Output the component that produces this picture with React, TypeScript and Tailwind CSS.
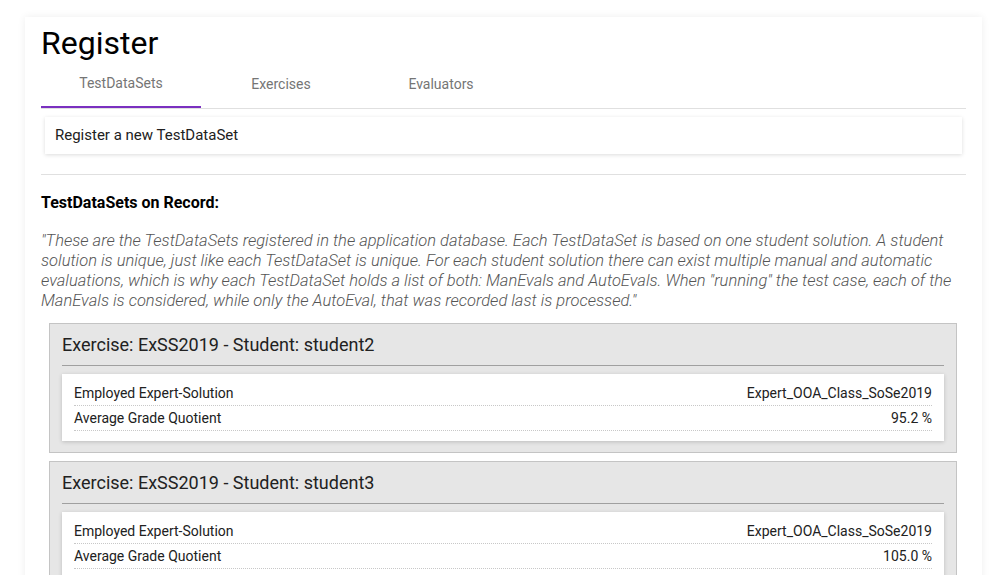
const TABS = ['TestDataSets', 'Exercises', 'Evaluators']

const DESCRIPTION =
  '"These are the TestDataSets registered in the application database. Each TestDataSet is based on one student solution. A student solution is unique, just like each TestDataSet is unique. For each student solution there can exist multiple manual and automatic evaluations, which is why each TestDataSet holds a list of both: ManEvals and AutoEvals. When "running" the test case, each of the ManEvals is considered, while only the AutoEval, that was recorded last is processed."'

const DATASETS = [
  { exercise: 'ExSS2019', student: 'student2', expert: 'Expert_OOA_Class_SoSe2019', grade: '95.2 %' },
  { exercise: 'ExSS2019', student: 'student3', expert: 'Expert_OOA_Class_SoSe2019', grade: '105.0 %' },
  { exercise: 'ExSS2019', student: 'student4', expert: 'Expert_OOA_Class_SoSe2019', grade: '88.1 %' },
]

function Row({ label, value }: { label: string; value: string }) {
  return (
    <div className="flex h-[25px] items-center justify-between border-b border-dotted border-[#c8c8c8] text-[14px] text-[#212121]">
      <span>{label}</span>
      <span>{value}</span>
    </div>
  )
}

function App() {
  return (
    <div className="min-h-screen bg-white pl-[25px] pr-[21px] pt-[17px] font-['Roboto',sans-serif]">
      <div className="bg-white px-4 pt-[7px] shadow-[0_0_8px_rgba(0,0,0,0.07)]">
        <h1 className="h-[37px] text-[32px] leading-[38px] text-black">Register</h1>

        <div className="flex border-b border-[#e0e0e0]">
          {TABS.map((tab, i) => (
            <div
              key={tab}
              className={
                i === 0
                  ? 'flex h-[47px] w-40 items-center justify-center border-b-2 border-[#7a30c0] text-[14px] text-[#757575] mb-[-1px]'
                  : 'flex h-[47px] w-40 items-center justify-center text-[14px] text-[#757575]'
              }
            >
              {tab}
            </div>
          ))}
        </div>

        <div className="mx-1 mt-2 flex h-[37px] items-center bg-white px-[10px] text-[15px] text-[#212121] shadow-[0_1px_4px_rgba(0,0,0,0.14)]">
          Register a new TestDataSet
        </div>

        <hr className="mt-5 border-t border-[#e0e0e0]" />

        <h3 className="mt-4 text-[16px] font-bold leading-6 text-black">TestDataSets on Record:</h3>
        <p className="mt-4 text-[16.5px] font-light italic leading-5 text-[#555555]">{DESCRIPTION}</p>

        <div className="mt-3 flex flex-col gap-2 pl-2 pr-[9px]">
          {DATASETS.map((d) => (
            <div key={d.student} className="border border-[#c4c4c4] bg-[#e6e6e6] px-3 pb-[11px] pt-[7px]">
              <div className="border-b border-[#a0a0a0] pb-[6px] text-[18px] leading-[28px] text-[#212121]">
                Exercise: {d.exercise} - Student: {d.student}
              </div>
              <div className="mt-2 bg-white px-3 pb-[10px] pt-[7px] shadow-[0_1px_4px_rgba(0,0,0,0.18)]">
                <Row label="Employed Expert-Solution" value={d.expert} />
                <Row label="Average Grade Quotient" value={d.grade} />
              </div>
            </div>
          ))}
        </div>
      </div>
    </div>
  )
}

export default App
